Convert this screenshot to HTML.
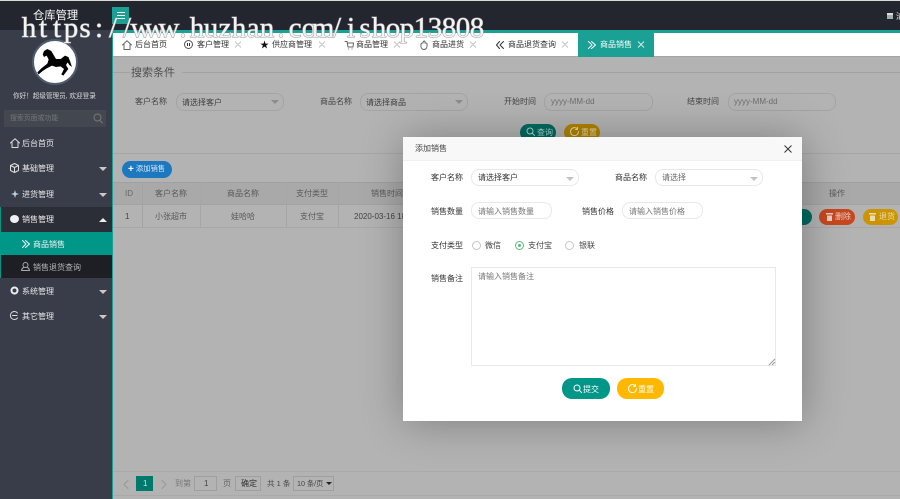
<!DOCTYPE html>
<html lang="zh"><head><meta charset="utf-8"><title>仓库管理</title>
<style>
*{box-sizing:border-box;margin:0;padding:0}
html,body{width:900px;height:499px;overflow:hidden;background:#b3b3b3}
body{position:relative;font-family:"Liberation Sans","Noto Sans CJK SC",sans-serif;font-size:8px;color:#444}
#w{position:absolute;left:0;top:0;width:900px;height:499px;overflow:hidden;background:#b3b3b3;filter:blur(.3px)}
.a,.t,.box{position:absolute}
.t{white-space:nowrap;line-height:12px;height:12px;margin-top:1px}
.box{border-radius:8px;background:#b3b3b3;border:1px solid #a4a4a4}
.m .box{background:#fff;border:1px solid #e8e8e8}
.tab{color:#333}
.side{color:#e8e8e8;font-size:8px}
.arr{position:absolute;width:0;height:0;border:4px solid transparent;border-top:4px solid #c9c9c9;border-bottom:0}
.sel{position:absolute;width:0;height:0;border:4px solid transparent;border-top:4px solid #c2c2c2;border-bottom:0}
.pill{position:absolute;border-radius:10px}
svg{position:absolute;overflow:visible}
.ic{fill:none;stroke-width:1;stroke-linecap:round;stroke-linejoin:round}
.rd{position:absolute;width:9px;height:9px;border-radius:50%;border:1px solid #c6c6c6;background:#fff}
</style></head><body><div id="w">

<!-- top header -->
<div class="a" style="left:0;top:0;width:900px;height:1px;background:#d8d8d8"></div>
<div class="a" style="left:0;top:1px;width:900px;height:29px;background:#23262e"></div>
<div class="a" style="left:113px;top:30px;width:787px;height:3px;background:#1aa094"></div>
<div class="a" style="left:112px;top:7px;width:17px;height:17px;background:#1aa094"></div>
<div class="a" style="left:117px;top:12px;width:8px;height:1px;background:#fff"></div>
<div class="a" style="left:117px;top:15px;width:8px;height:1px;background:#fff"></div>
<div class="a" style="left:117px;top:18px;width:8px;height:1px;background:#fff"></div>
<div class="t" style="left:33px;top:9px;color:#fff;font-size:11.3px">仓库管理</div>
<div class="a" style="left:887px;top:13px;width:6px;height:6px;background:#9fb0a8;border-top:2px solid #ddd"></div>
<div class="t" style="left:896px;top:10px;color:#eee">清</div>

<!-- sidebar -->
<div class="a" style="left:0;top:30px;width:112px;height:469px;background:#393d49"></div>
<div class="a" style="left:112px;top:33px;width:1px;height:466px;background:#1aa094"></div>
<div class="a" style="left:32px;top:39px;width:46px;height:46px;border-radius:50%;background:#fff;border:2px solid #4e5d6f"></div>
<svg style="left:20px;top:35px" width="70" height="55" viewBox="0 0 210 165"><path fill="#000" d="M68 58L72 48 82 42 94 48 102 62 108 72 122 72 135 62 145 66 150 78 156 96 148 90 143 82 138 90 145 102 130 122 124 118 132 102 122 94 108 96 96 92 80 100 68 108 56 118 52 112 64 100 82 86 86 74 80 62 72 66Z"/></svg>
<div class="t side" style="left:13px;top:90px;font-size:6.6px;color:#ddd">你好！超级管理员, 欢迎登录</div>
<div class="a" style="left:4px;top:110px;width:102px;height:17px;background:#43474f"></div>
<div class="t" style="left:10px;top:112px;color:#777;font-size:6.9px">搜索页面或功能</div>
<svg style="left:93px;top:113px" width="10" height="11" viewBox="0 0 10 11"><circle class="ic" stroke="#777" cx="4.500" cy="4.500" r="3.500"/><path class="ic" stroke="#777" d="M7 7.500L9.500 10"/></svg>

<svg style="left:10px;top:138px" width="10" height="10" viewBox="0 0 10 10"><path class="ic" stroke="#ddd" d="M.5 5L5 .8 9.500 5M2 4.500V9.500H8V4.500"/></svg>
<div class="t side" style="left:22px;top:137px">后台首页</div>
<svg style="left:10px;top:163px" width="9" height="10" viewBox="0 0 9 10"><path class="ic" stroke="#ddd" d="M4.500 .5L8.500 2.500V7.500L4.500 9.500.5 7.500V2.500ZM.5 2.500L4.500 4.500 8.500 2.500M4.500 4.500V9.500"/></svg>
<div class="t side" style="left:22px;top:162px">基础管理</div><div class="arr" style="left:99px;top:167px"></div>
<svg style="left:11px;top:190px" width="8" height="8" viewBox="0 0 8 8"><path fill="#bcd" d="M4 0L5 3 8 4 5 5 4 8 3 5 0 4 3 3Z"/></svg>
<div class="t side" style="left:22px;top:188px">进货管理</div><div class="arr" style="left:99px;top:193px"></div>

<div class="a" style="left:0;top:207px;width:112px;height:25px;background:#2b2e37"></div>
<div class="a" style="left:0;top:207px;width:1px;height:71px;background:#009688"></div>
<div class="a" style="left:10px;top:215px;width:9px;height:8px;border-radius:50%;background:#f0f0f0"></div>
<div class="t side" style="left:22px;top:213px;color:#f2f2f2">销售管理</div>
<div class="arr" style="left:99px;top:218px;border-top:0;border-bottom:4px solid #eee"></div>
<div class="a" style="left:1px;top:232px;width:111px;height:23px;background:#009688"></div>
<svg style="left:22px;top:240px" width="8" height="8" viewBox="0 0 8 8"><path class="ic" stroke="#fff" d="M.5 .5L4 4 .5 7.500M3.500 .5L7.500 4 3.500 7.500"/></svg>
<div class="t" style="left:33px;top:238px;color:#f4f4f4">商品销售</div>
<div class="a" style="left:1px;top:255px;width:111px;height:23px;background:#1e1f25"></div>
<svg style="left:21px;top:262px" width="9" height="9" viewBox="0 0 9 9"><circle class="ic" stroke="#aaa" cx="4.500" cy="3" r="2.500"/><path class="ic" stroke="#aaa" d="M.5 8.500C1 6 2.500 5.500 3 5.500M8.500 8.500C8 6 6.500 5.500 6 5.500M.5 8.500H8.500"/></svg>
<div class="t" style="left:33px;top:261px;color:#b5b5b5">销售退货查询</div>

<svg style="left:10px;top:286px" width="9" height="9" viewBox="0 0 9 9"><circle cx="4.500" cy="4.500" r="3" fill="none" stroke="#eee" stroke-width="2"/></svg>
<div class="t side" style="left:22px;top:285px">系统管理</div><div class="arr" style="left:99px;top:290px"></div>
<svg style="left:10px;top:311px" width="9" height="9" viewBox="0 0 9 9"><path class="ic" stroke="#ddd" d="M7.500 2A4 4 0 1 0 7.500 7M2.500 4.500H7"/></svg>
<div class="t side" style="left:22px;top:310px">其它管理</div><div class="arr" style="left:99px;top:315px"></div>

<!-- tabs -->
<div class="a" style="left:113px;top:33px;width:787px;height:23px;background:#fff"></div>
<div class="a" style="left:113px;top:56px;width:787px;height:1px;background:#a6a6a6"></div>
<svg style="left:122px;top:40px" width="10" height="10" viewBox="0 0 10 10"><path class="ic" stroke="#666" d="M.5 5L5 .8 9.500 5M2 4.500V9.500H8V4.500"/></svg>
<div class="t tab" style="left:135px;top:38px">后台首页</div>
<svg style="left:184px;top:40px" width="9" height="9" viewBox="0 0 9 9"><circle class="ic" stroke="#555" cx="4.500" cy="4.500" r="4"/><path stroke="#333" d="M3.500 3V6M5.500 3V6"/></svg>
<div class="t tab" style="left:197px;top:38px">客户管理</div>
<div class="t" style="left:260px;top:38px;font-size:9px;color:#111">★</div>
<div class="t tab" style="left:272px;top:38px">供应商管理</div>
<svg style="left:345px;top:41px" width="9" height="9" viewBox="0 0 9 9"><path class="ic" stroke="#666" d="M0 .5H2L3 6H8L8.500 2H2.500M3.500 8H3.600M7 8H7.100"/></svg>
<div class="t tab" style="left:356px;top:38px">商品管理</div>
<svg style="left:420px;top:40px" width="8" height="10" viewBox="0 0 8 10"><path class="ic" stroke="#666" d="M1 4.500C.5 7 1.500 9.500 4 9.500S7.500 7 7 3.500C6 2.500 5 3 5 3V1.500C4 .5 3 1.500 3 3 2 3 1 3.500 1 4.500Z"/></svg>
<div class="t tab" style="left:432px;top:38px">商品进货</div>
<svg style="left:496px;top:41px" width="8" height="8" viewBox="0 0 8 8"><path class="ic" stroke="#333" d="M3.500 .5L.5 4 3.500 7.500M7.500 .5L4 4 7.500 7.500"/></svg>
<div class="t tab" style="left:508px;top:38px">商品退货查询</div>
<div class="a" style="left:578px;top:33px;width:76px;height:24px;background:#1aa094"></div>
<svg style="left:588px;top:41px" width="8" height="8" viewBox="0 0 8 8"><path class="ic" stroke="#fff" d="M.5 .5L4 4 .5 7.500M3.500 .5L7.500 4 3.500 7.500"/></svg>
<div class="t" style="left:600px;top:38px;color:#fff">商品销售</div>
<svg style="left:0;top:0" width="900" height="60"><path stroke="#c4c4c4" fill="none" d="M235 41.500l6 6M241 41.500l-6 6M319 41.500l6 6M325 41.500l-6 6M394 41.500l6 6M400 41.500l-6 6M470 41.500l6 6M476 41.500l-6 6M562 41.500l6 6M568 41.500l-6 6"/><path stroke="#cfeee9" fill="none" d="M638 41.500l6 6M644 41.500l-6 6"/></svg>

<!-- search -->
<div class="a" style="left:113px;top:72px;width:17px;height:1px;background:#a2a2a2"></div>
<div class="a" style="left:182px;top:72px;width:718px;height:1px;background:#a2a2a2"></div>
<div class="t" style="left:131px;top:66px;font-size:11px;color:#4f4f4f">搜索条件</div>
<div class="t" style="left:135px;top:95px">客户名称</div>
<div class="box" style="left:176px;top:93px;width:108px;height:18px"></div>
<div class="t" style="left:182px;top:96px;color:#3f3f3f">请选择客户</div><div class="sel" style="left:271px;top:100px;border-top-color:#8c8c8c"></div>
<div class="t" style="left:320px;top:95px">商品名称</div>
<div class="box" style="left:360px;top:93px;width:108px;height:18px"></div>
<div class="t" style="left:366px;top:96px;color:#3f3f3f">请选择商品</div><div class="sel" style="left:455px;top:100px;border-top-color:#8c8c8c"></div>
<div class="t" style="left:504px;top:95px">开始时间</div>
<div class="box" style="left:544px;top:93px;width:109px;height:18px"></div>
<div class="t" style="left:551px;top:95px;color:#6e6e6e">yyyy-MM-dd</div>
<div class="t" style="left:687px;top:95px">结束时间</div>
<div class="box" style="left:728px;top:93px;width:108px;height:18px"></div>
<div class="t" style="left:734px;top:95px;color:#6e6e6e">yyyy-MM-dd</div>
<div class="pill" style="left:520px;top:124px;width:36px;height:17px;background:#006a60"></div>
<svg style="left:526px;top:127px" width="9" height="9" viewBox="0 0 9 9"><circle class="ic" stroke="#a8d8d2" cx="4" cy="4" r="3"/><path class="ic" stroke="#a8d8d2" d="M6.200 6.200L8.500 8.500"/></svg>
<div class="t" style="left:537px;top:126px;color:#a8d8d2">查询</div>
<div class="pill" style="left:564px;top:124px;width:36px;height:17px;background:#b18300"></div>
<svg style="left:570px;top:127px" width="9" height="9" viewBox="0 0 9 9"><path class="ic" stroke="#e8d9a8" d="M7.500 2A4 4 0 1 0 8.500 4.500M7.500 .5V2.500H5.500"/></svg>
<div class="t" style="left:581px;top:126px;color:#e8d9a8">重置</div>
<div class="a" style="left:113px;top:153px;width:787px;height:1px;background:#a6a6a6"></div>

<!-- table -->
<div class="pill" style="left:122px;top:161px;width:50px;height:17px;background:#1c78bf"></div>
<div class="t" style="left:128px;top:162px;color:#d9e8f4;font-size:7.300px"><b style="font-size:10px;color:#fff;vertical-align:-1px">+</b> 添加销售</div>
<div class="a" style="left:113px;top:182px;width:787px;height:23px;background:#a9a9a9;border-top:1px solid #a0a0a0;border-bottom:1px solid #a3a3a3"></div>
<div class="a" style="left:113px;top:205px;width:787px;height:23px;border-bottom:1px solid #a8a8a8"></div>
<div class="a" style="left:142px;top:182px;width:1px;height:46px;background:#a3a3a3"></div>
<div class="a" style="left:200px;top:182px;width:1px;height:46px;background:#a6a6a6"></div>
<div class="a" style="left:286px;top:182px;width:1px;height:46px;background:#a6a6a6"></div>
<div class="a" style="left:338px;top:182px;width:1px;height:46px;background:#a6a6a6"></div>
<div class="t" style="left:125px;top:187px;color:#666">ID</div>
<div class="t" style="left:155px;top:187px;color:#595959">客户名称</div>
<div class="t" style="left:227px;top:187px;color:#595959">商品名称</div>
<div class="t" style="left:296px;top:187px;color:#595959">支付类型</div>
<div class="t" style="left:371px;top:187px;color:#595959">销售时间</div>
<div class="t" style="left:829px;top:187px;color:#595959">操作</div>
<div class="t" style="left:125px;top:210px;color:#444">1</div>
<div class="t" style="left:155px;top:210px;color:#595959">小张超市</div>
<div class="t" style="left:231px;top:210px;color:#595959">娃哈哈</div>
<div class="t" style="left:300px;top:210px;color:#595959">支付宝</div>
<div class="t" style="left:354px;top:210px;color:#444">2020-03-16 18:4</div>
<div class="pill" style="left:785px;top:209px;width:27px;height:16px;background:#006a60"></div>
<div class="pill" style="left:819px;top:209px;width:36px;height:16px;background:#c8471f"></div>
<svg style="left:826px;top:213px" width="7" height="8" viewBox="0 0 7 8"><path fill="#e8cfc6" d="M0 0H7V1.500H0ZM1 2.500H6V8H1Z"/></svg>
<div class="t" style="left:835px;top:210px;color:#e8cfc6">删除</div>
<div class="pill" style="left:863px;top:209px;width:35px;height:16px;background:#cc9500"></div>
<svg style="left:869px;top:213px" width="7" height="8" viewBox="0 0 7 8"><path fill="#eadcae" d="M0 0H7V1.500H0ZM1 2.500H6V8H1Z"/></svg>
<div class="t" style="left:879px;top:210px;color:#eadcae">退货</div>

<!-- pagination -->
<div class="a" style="left:113px;top:471px;width:787px;height:1px;background:#aaa"></div>
<div class="a" style="left:113px;top:495px;width:787px;height:1px;background:#aaa"></div>
<svg style="left:123px;top:480px" width="6" height="9" viewBox="0 0 6 9"><path class="ic" stroke="#999" d="M5 .5L1 4.500 5 8.500"/></svg>
<div class="a" style="left:136px;top:476px;width:17px;height:15px;background:#00796c"></div>
<div class="t" style="left:143px;top:477px;color:#c9e4e0">1</div>
<svg style="left:161px;top:480px" width="6" height="9" viewBox="0 0 6 9"><path class="ic" stroke="#999" d="M1 .5L5 4.500 1 8.500"/></svg>
<div class="t" style="left:175px;top:477px;color:#777">到第</div>
<div class="a" style="left:194px;top:476px;width:23px;height:15px;border:1px solid #9f9f9f"></div>
<div class="t" style="left:204px;top:477px;color:#444">1</div>
<div class="t" style="left:223px;top:477px;color:#666">页</div>
<div class="a" style="left:235px;top:476px;width:26px;height:15px;border:1px solid #9f9f9f"></div>
<div class="t" style="left:241px;top:477px;color:#333">确定</div>
<div class="t" style="left:267px;top:477px;color:#444;font-size:7.500px">共 1 条</div>
<div class="a" style="left:293px;top:476px;width:41px;height:15px;border:1px solid #9f9f9f"></div>
<div class="t" style="left:297px;top:477px;color:#444;font-size:7.200px">10 条/页</div>
<div class="sel" style="left:326px;top:482px;border-width:3px;border-bottom:0;border-top-color:#222"></div>

<!-- modal -->
<div class="a m" style="left:403px;top:137px;width:399px;height:284px;background:#fff;box-shadow:1px 1px 40px rgba(0,0,0,.3)"></div>
<div class="a" style="left:403px;top:137px;width:399px;height:24px;background:#f8f8f8;border-bottom:1px solid #f0f0f0"></div>
<div class="t" style="left:415px;top:142px;color:#444">添加销售</div>
<svg style="left:784px;top:145px" width="8" height="8" viewBox="0 0 8 8"><path d="M.5 .5L7.500 7.500M7.500 .5L.5 7.500" stroke="#333" fill="none"/></svg>
<div class="m">
<div class="t" style="left:431px;top:171px;color:#333">客户名称</div>
<div class="box" style="left:471px;top:169px;width:108px;height:17px"></div>
<div class="t" style="left:478px;top:171px;color:#333">请选择客户</div><div class="sel" style="left:566px;top:177px"></div>
<div class="t" style="left:615px;top:171px;color:#333">商品名称</div>
<div class="box" style="left:655px;top:169px;width:108px;height:17px"></div>
<div class="t" style="left:662px;top:171px;color:#666">请选择</div><div class="sel" style="left:750px;top:177px"></div>
<div class="t" style="left:431px;top:205px;color:#333">销售数量</div>
<div class="box" style="left:471px;top:202px;width:81px;height:17px"></div>
<div class="t" style="left:478px;top:205px;color:#777">请输入销售数量</div>
<div class="t" style="left:582px;top:205px;color:#333">销售价格</div>
<div class="box" style="left:622px;top:202px;width:81px;height:17px"></div>
<div class="t" style="left:629px;top:205px;color:#777">请输入销售价格</div>
<div class="t" style="left:431px;top:239px;color:#333">支付类型</div>
<div class="rd" style="left:472px;top:241px"></div>
<div class="t" style="left:485px;top:239px;color:#444">微信</div>
<div class="rd" style="left:515px;top:241px;border-color:#5fb878"></div>
<div class="a" style="left:518px;top:244px;width:3px;height:3px;border-radius:50%;background:#5fb878"></div>
<div class="t" style="left:528px;top:239px;color:#444">支付宝</div>
<div class="rd" style="left:565px;top:241px"></div>
<div class="t" style="left:579px;top:239px;color:#444">银联</div>
<div class="t" style="left:431px;top:272px;color:#333">销售备注</div>
<div class="box" style="left:471px;top:267px;width:305px;height:99px;border-radius:0"></div>
<div class="t" style="left:478px;top:270px;color:#777">请输入销售备注</div>
<svg style="left:769px;top:359px" width="6" height="6" viewBox="0 0 6 6"><path d="M0 6L6 0M3 6L6 3" stroke="#999" fill="none"/></svg>
</div>
<div class="pill" style="left:562px;top:378px;width:48px;height:21px;background:#009688"></div>
<svg style="left:573px;top:384px" width="9" height="9" viewBox="0 0 9 9"><circle class="ic" stroke="#fff" cx="4" cy="4" r="3"/><path class="ic" stroke="#fff" d="M6.200 6.200L8.500 8.500"/></svg>
<div class="t" style="left:583px;top:383px;color:#fff">提交</div>
<div class="pill" style="left:617px;top:378px;width:47px;height:21px;background:#ffb800"></div>
<svg style="left:628px;top:384px" width="9" height="9" viewBox="0 0 9 9"><path class="ic" stroke="#fff" d="M7.500 2A4 4 0 1 0 8.500 4.500M7.500 .5V2.500H5.500"/></svg>
<div class="t" style="left:638px;top:383px;color:#fff">重置</div>

<!-- watermark -->
<svg style="left:0;top:0" width="900" height="60">
<text y="37" x="29 43 57 71 85 99 113 127 141 155 169 183 197 211 225 239 253 267 281 295 309 323 337 351 365 379 393 407 421 435 449 463 477" text-anchor="middle" font-family="Liberation Serif" font-size="29" fill="#f4f4f4" stroke="#9a9a9a" stroke-width="1" style="paint-order:stroke">https://www.huzhan.com/ishop13808</text>
</svg>
</div></body></html>
